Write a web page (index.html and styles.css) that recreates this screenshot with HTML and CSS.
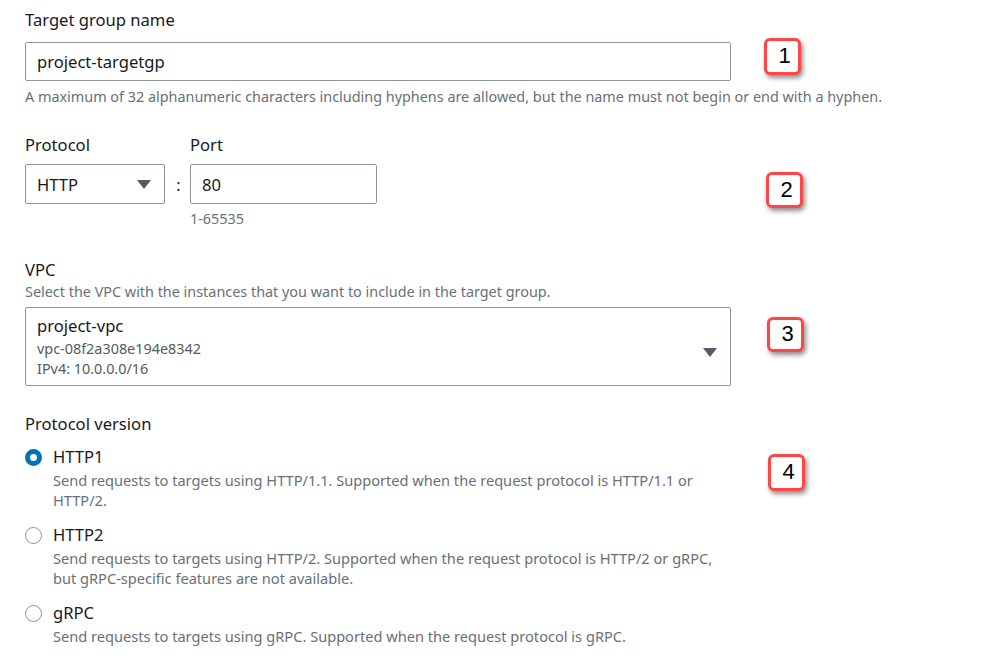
FILE: index.html
```html
<!DOCTYPE html>
<html>
<head>
<meta charset="utf-8">
<link rel="stylesheet" href="styles.css">
</head>
<body>
<div class="page">
  <section class="field f-name">
    <div class="label">Target group name</div>
    <div class="input wide"><span>project-targetgp</span></div>
    <div class="hint">A maximum of 32 alphanumeric characters including hyphens are allowed, but the name must not begin or end with a hyphen.</div>
    <div class="badge b1">1</div>
  </section>

  <section class="field f-proto">
    <div class="proto-row">
      <div class="col">
        <div class="label">Protocol</div>
        <div class="input select-proto"><span>HTTP</span><span class="caret"></span></div>
      </div>
      <div class="colon">:</div>
      <div class="col">
        <div class="label">Port</div>
        <div class="input port"><span>80</span></div>
        <div class="hint small-hint">1-65535</div>
      </div>
    </div>
    <div class="badge b2">2</div>
  </section>

  <section class="field f-vpc">
    <div class="label">VPC</div>
    <div class="hint desc">Select the VPC with the instances that you want to include in the target group.</div>
    <div class="input vpc-select">
      <div class="vpc-text">
        <div class="vpc-name">project-vpc</div>
        <div class="vpc-sub">vpc-08f2a308e194e8342</div>
        <div class="vpc-sub">IPv4: 10.0.0.0/16</div>
      </div>
      <span class="caret"></span>
    </div>
    <div class="badge b3">3</div>
  </section>

  <section class="field f-version">
    <div class="label">Protocol version</div>
    <div class="radio-item">
      <div class="radio-line"><span class="radio checked"></span><span class="radio-label">HTTP1</span></div>
      <div class="radio-desc">Send requests to targets using HTTP/1.1. Supported when the request protocol is HTTP/1.1 or<br>HTTP/2.</div>
    </div>
    <div class="radio-item">
      <div class="radio-line"><span class="radio"></span><span class="radio-label">HTTP2</span></div>
      <div class="radio-desc">Send requests to targets using HTTP/2. Supported when the request protocol is HTTP/2 or gRPC,<br>but gRPC-specific features are not available.</div>
    </div>
    <div class="radio-item">
      <div class="radio-line"><span class="radio"></span><span class="radio-label">gRPC</span></div>
      <div class="radio-desc">Send requests to targets using gRPC. Supported when the request protocol is gRPC.</div>
    </div>
    <div class="badge b4">4</div>
  </section>
</div>
</body>
</html>
```

FILE: styles.css
```css
* { box-sizing: border-box; }
html, body { margin: 0; padding: 0; background: #fff; }
body {
  font-family: "Noto Sans", "Open Sans", sans-serif;
  color: #16191f;
  width: 999px;
  height: 667px;
  overflow: hidden;
}
.page {
  padding: 9px 0 0 25px;
  position: relative;
}
.field { position: relative; }
.label {
  font-size: 16.6px;
  line-height: 22px;
  color: #16191f;
}
.input {
  border: 1px solid #8d9599;
  border-radius: 2px;
  height: 39px;
  display: flex;
  align-items: center;
  padding: 0 11px;
  font-size: 16.6px;
  color: #16191f;
  background: #fff;
}
.wide { width: 706px; margin-top: 11px; }
.hint {
  font-size: 14.4px;
  line-height: 20px;
  color: #687078;
  margin-top: 6px;
}
.f-proto { margin-top: 27px; }
.proto-row { display: flex; align-items: flex-start; }
.col { display: flex; flex-direction: column; }
.col .label { margin-bottom: 8px; }
.select-proto { width: 140px; height: 40px; justify-content: space-between; padding-right: 13px; }
.colon { width: 25px; text-align: center; margin-top: 41px; font-size: 16px; line-height: 20px; padding-left: 2px; }
.port { width: 187px; height: 40px; }
.small-hint { margin-top: 5px; }
.caret {
  width: 0; height: 0;
  border-left: 7px solid transparent;
  border-right: 7px solid transparent;
  border-top: 9px solid #545b64;
}
.f-vpc { margin-top: 30px; }
.desc { margin-top: 1px; }
.vpc-select {
  width: 706px;
  height: 79px;
  margin-top: 5px;
  align-items: flex-start;
  justify-content: space-between;
  padding: 7px 13px 0 11px;
}
.vpc-select .caret { margin-top: 33px; }
.vpc-name { font-size: 16.6px; line-height: 22px; }
.vpc-sub { font-size: 14.4px; line-height: 19.5px; color: #545b64; }
.vpc-name + .vpc-sub { margin-top: 2px; }
.f-version { margin-top: 27px; }
.radio-item { margin-top: 11px; }
.radio-item + .radio-item { margin-top: 14px; }
.radio-line { display: flex; align-items: center; height: 22px; }
.radio {
  width: 17px; height: 17px;
  border-radius: 50%;
  border: 1.5px solid #879596;
  margin-right: 11px;
  flex: none;
}
.radio.checked { border: 5px solid #0073bb; }
.radio-label { font-size: 16.6px; line-height: 22px; }
.radio-desc {
  padding-left: 28px;
  font-size: 14.6px;
  line-height: 19.5px;
  color: #687078;
  margin-top: 3px;
}
.badge {
  position: absolute;
  width: 37px;
  height: 37px;
  border: 3.5px solid #ff4545;
  border-radius: 6px;
  background: #fff;
  box-shadow: 2px 3px 5px rgba(0,0,0,0.45);
  font-family: "Liberation Sans", Arial, sans-serif;
  font-size: 22px;
  line-height: 30px;
  text-align: center;
  padding-left: 4px;
  color: #000;
}
.b1 { left: 739px; top: 29px; }
.b2 { left: 741px; top: 38px; height: 36px; }
.b3 { left: 742px; top: 58px; height: 35px; line-height: 28px; }
.b4 { left: 743px; top: 41px; }
```
